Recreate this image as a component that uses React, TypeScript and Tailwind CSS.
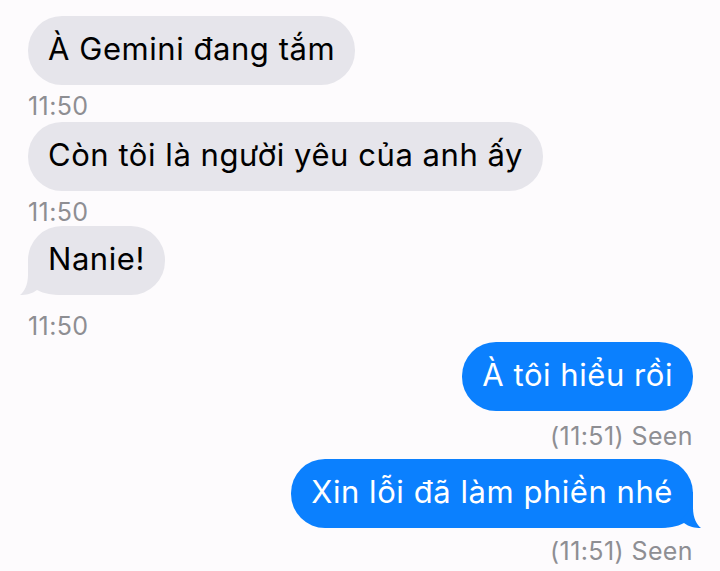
const font = { fontFamily: "Inter, 'Noto Sans', sans-serif" };

type Msg = { text: string; meta: string; tail?: boolean; mt: string; metaMt: string };

const received: Msg[] = [
  { text: "À Gemini đang tắm", meta: "11:50", mt: "mt-[16px]", metaMt: "mt-[7px]" },
  { text: "Còn tôi là người yêu của anh ấy", meta: "11:50", mt: "mt-[2px]", metaMt: "mt-[7px]" },
  { text: "Nanie!", meta: "11:50", tail: true, mt: "mt-0", metaMt: "mt-[17px]" },
];

const sent: Msg[] = [
  { text: "À tôi hiểu rồi", meta: "(11:51) Seen", mt: "mt-[2px]", metaMt: "mt-[11px]" },
  { text: "Xin lỗi đã làm phiền nhé", meta: "(11:51) Seen", tail: true, mt: "mt-[9px]", metaMt: "mt-[9px]" },
];

function LeftTail() {
  return (
    <svg className="absolute -left-[8px] bottom-0" width="44" height="36" viewBox="0 0 44 36">
      <path d="M8 0 L8 16 C8 26 4 33 0 36 C6 36 12 35 17 31 C24 35 33 36 44 36 L44 0 Z" fill="#e6e5eb" />
    </svg>
  );
}

function RightTail() {
  return (
    <svg className="absolute -right-[8px] bottom-0" width="44" height="36" viewBox="0 0 44 36">
      <path d="M36 0 L36 16 C36 26 40 33 44 36 C38 36 32 35 27 31 C20 35 11 36 0 36 L0 0 Z" fill="#0b80fe" />
    </svg>
  );
}

export default function App() {
  return (
    <div className="min-h-[571px] w-[720px] bg-[#fdfbfd] text-black" style={font}>
      <div className="flex flex-col items-start pl-[28px]">
        {received.map((m, i) => (
          <div key={i} className={`flex flex-col items-start ${m.mt}`}>
            <div className="relative">
              {m.tail && <LeftTail />}
              <div className="relative h-[69px] rounded-[34px] bg-[#e6e5eb] px-[20px] pt-[14px] text-[31px] leading-[38px] tracking-[0.55px] whitespace-nowrap">
                {m.text}
              </div>
            </div>
            <div className={`${m.metaMt} text-[25px] leading-[28px] tracking-[0.4px] text-[#8e8e93]`}>{m.meta}</div>
          </div>
        ))}
      </div>
      <div className="flex flex-col items-end pr-[27px]">
        {sent.map((m, i) => (
          <div key={i} className={`flex flex-col items-end ${m.mt}`}>
            <div className="relative">
              {m.tail && <RightTail />}
              <div className="relative h-[69px] rounded-[34px] bg-[#0b80fe] px-[20px] pt-[14px] text-[31px] leading-[38px] tracking-[0.55px] text-white whitespace-nowrap">
                {m.text}
              </div>
            </div>
            <div className={`${m.metaMt} text-[25px] leading-[28px] tracking-[0.4px] text-[#8e8e93]`}>{m.meta}</div>
          </div>
        ))}
      </div>
    </div>
  );
}
